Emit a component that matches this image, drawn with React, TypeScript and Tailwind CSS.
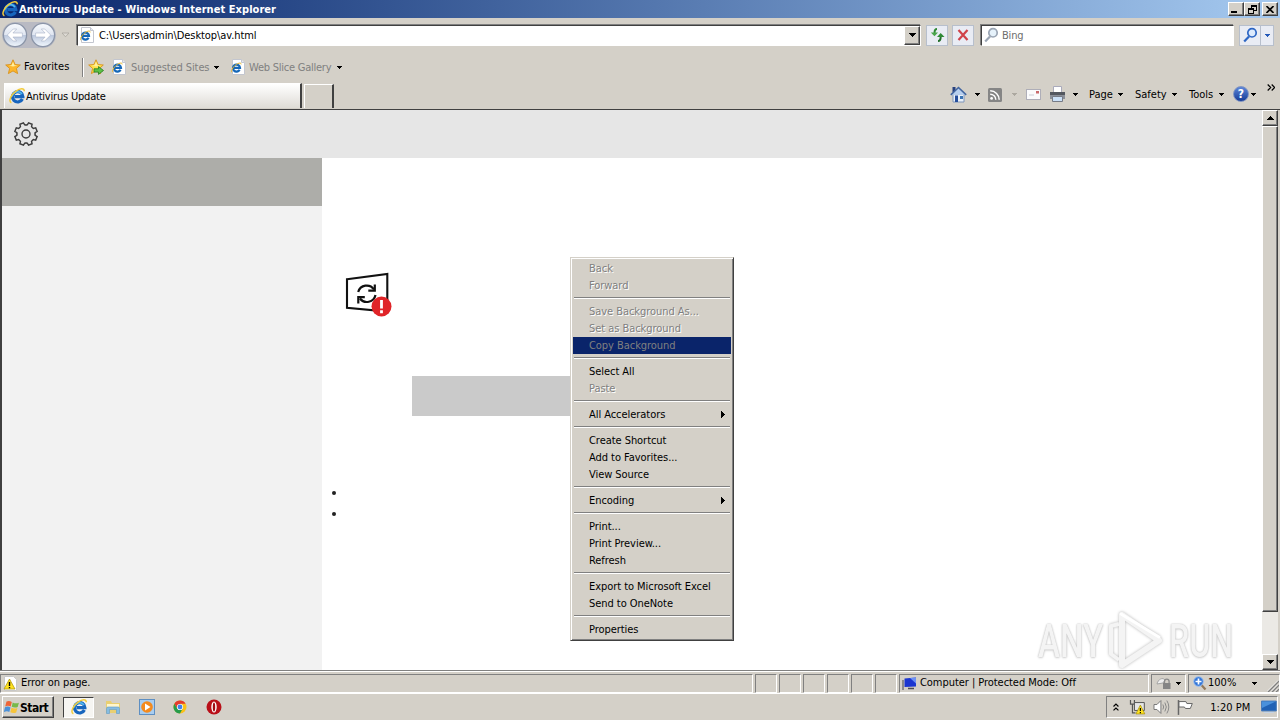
import type { ReactNode } from "react"
import clsx from "clsx"

type MenuItem = { label: string; disabled?: boolean; active?: boolean; submenu?: boolean }

const menuGroups: MenuItem[][] = [
  [
    { label: "Back", disabled: true },
    { label: "Forward", disabled: true },
  ],
  [
    { label: "Save Background As...", disabled: true },
    { label: "Set as Background", disabled: true },
    { label: "Copy Background", disabled: true, active: true },
  ],
  [{ label: "Select All" }, { label: "Paste", disabled: true }],
  [{ label: "All Accelerators", submenu: true }],
  [{ label: "Create Shortcut" }, { label: "Add to Favorites..." }, { label: "View Source" }],
  [{ label: "Encoding", submenu: true }],
  [{ label: "Print..." }, { label: "Print Preview..." }, { label: "Refresh" }],
  [{ label: "Export to Microsoft Excel" }, { label: "Send to OneNote" }],
  [{ label: "Properties" }],
]

const raised = "border border-t-white border-l-white border-r-[#404040] border-b-[#404040] bg-[#d4d0c8] shadow-[inset_-1px_-1px_0_#808080]"
const sunken = "border border-t-[#808080] border-l-[#808080] border-r-white border-b-white"

function Caret({ className = "text-black" }: { className?: string }) {
  return (
    <svg width="5" height="3" viewBox="0 0 5 3" className={clsx("shrink-0", className)} shapeRendering="crispEdges">
      <path d="M0 0h5v1H4v1H3v1H2V2H1V1H0z" fill="currentColor" />
    </svg>
  )
}

function IeLogo({ size = 16 }: { size?: number }) {
  return (
    <svg width={size} height={size} viewBox="0 0 16 16" className="shrink-0">
      <path d="M13.4 11A5.2 5.2 0 1 1 13.9 8.7H5.500" fill="none" stroke="#1765bd" strokeWidth="3.200" />
      <path d="M3.200 8.500A5.400 5.400 0 0 1 13 6" fill="none" stroke="#52b9f0" strokeWidth="1.700" />
      <path d="M2.400 14.800C-.9 13.400 2 6.800 7 3.200 11 .4 15.500-.3 15.200 3.200" fill="none" stroke="#f2cb3c" strokeWidth="1.500" />
    </svg>
  )
}

function IePage() {
  return (
    <svg width="15" height="16" viewBox="0 0 15 16" className="shrink-0">
      <path d="M1.500.5h9l3 3v12h-12z" fill="#fff" stroke="#c3c6cf" />
      <path d="M10.500.5v3h3" fill="#e5e8ef" stroke="#c3c6cf" />
      <path d="M8.600 10.700A3.500 3.500 0 1 1 9 8.900H2.500" fill="none" stroke="#1668b8" strokeWidth="2.200" />
      <path d="M.8 13.200C-.6 11.600 3 6.300 6.800 4.600c2-.9 3.500-.8 3.400.8" fill="none" stroke="#e9b72b" strokeWidth="1" />
    </svg>
  )
}

function Star({ arrow }: { arrow?: boolean }) {
  return (
    <svg width="16" height="16" viewBox="0 0 16 16" className="shrink-0">
      <path d="M8 .8l2.1 4.7 5.2.5-3.9 3.4 1.2 5.2L8 11.9l-4.6 2.7 1.2-5.2L.7 6l5.2-.5z" fill={arrow ? "#ffe24a" : "#fdb62b"} stroke="#d8921c" strokeWidth=".9" />
      <path d="M8 2.8l1.4 3.4 3.2.3-4.6 1-4.2-.9 2.8-.4z" fill="#fff0a0" />
      {arrow && <path d="M6 9.8h4.5V7.600l5 3.900-5 3.900v-2.300H6z" fill="#5cc148" stroke="#267b1c" strokeWidth=".8" />}
    </svg>
  )
}

function Magnifier({ stroke, fill }: { stroke: string; fill: string }) {
  return (
    <svg width="15" height="16" viewBox="0 0 15 16" className="shrink-0">
      <path d="M6 9.5L1.2 14.6" stroke={stroke} strokeWidth="2.2" />
      <circle cx="9" cy="5.8" r="4.2" fill={fill} stroke={stroke} strokeWidth="1.7" />
    </svg>
  )
}

function NavCircle({ flip }: { flip?: boolean }) {
  return (
    <svg width="26" height="26" viewBox="0 0 26 26" className="shrink-0">
      <defs>
        <linearGradient id="nav" x1="0" y1="0" x2="0" y2="1">
          <stop offset="0" stopColor="#f8fafd" />
          <stop offset=".48" stopColor="#e0e6f1" />
          <stop offset=".52" stopColor="#bcc8dd" />
          <stop offset="1" stopColor="#f1f7fd" />
        </linearGradient>
      </defs>
      <circle cx="13" cy="13" r="11.6" fill="url(#nav)" stroke="#8b95a8" strokeWidth="1.3" />
      <g transform={flip ? "translate(26 0) scale(-1 1)" : undefined}>
        <path d="M5.3 13l6-6h3.400l-3.800 4h9.500v4h-9.500l3.800 4h-3.400z" fill="#fff" stroke="#a7b2c8" strokeWidth=".6" />
      </g>
    </svg>
  )
}

function TitleBar() {
  return (
    <div className="flex h-[18px] items-center bg-linear-to-r from-[#0a246a] to-[#a6caf0] pr-[2px] pl-[2px]">
      <IeLogo />
      <span className="ml-px pt-[2px] text-[11px] font-bold tracking-[0.05px] text-white">Antivirus Update - Windows Internet Explorer</span>
      <div className="ml-auto flex">
        <div className={clsx("flex h-[14px] w-4 items-end justify-center pb-[2px]", raised)}>
          <div className="mr-1 h-[2px] w-[6px] bg-black" />
        </div>
        <div className={clsx("flex h-[14px] w-4 items-center justify-center", raised)}>
          <svg width="9" height="9" viewBox="0 0 9 9" shapeRendering="crispEdges">
            <path d="M3 0h6v6H6V5h2V2H4v1H3zM0 3h6v6H0zm1 2v3h4V5z" fill="#000" fillRule="evenodd" />
          </svg>
        </div>
        <div className={clsx("ml-[2px] flex h-[14px] w-4 items-center justify-center", raised)}>
          <svg width="8" height="7" viewBox="0 0 8 7">
            <path d="M.5 0l7 7M7.5 0l-7 7" stroke="#000" strokeWidth="1.6" />
          </svg>
        </div>
      </div>
    </div>
  )
}

function ToolButton({ className, children }: { className: string; children: ReactNode }) {
  return <div className={clsx("flex h-[21px] items-center justify-center border border-[#b7bfcc] bg-[#e9ecf4]", className)}>{children}</div>
}

function AddressRow() {
  return (
    <div className="flex h-[34px] items-center pl-[2px]">
      <div className="flex rounded-full bg-[#b9bac3]">
        <NavCircle />
        <div className="ml-[2px]">
          <NavCircle flip />
        </div>
      </div>
      <svg width="9" height="6" viewBox="0 0 9 6" className="ml-[5px]">
        <path d="M1 1h7L4.500 4.800z" fill="#dedbd5" stroke="#aaa69e" strokeWidth=".8" />
      </svg>
      <div className="ml-[7px] flex h-[21px] w-[844px] items-center border border-t-[#404040] border-r-white border-b-white border-l-[#404040] bg-white pl-[2px] shadow-[-1px_-1px_0_#808080]">
        <IePage />
        <span className="ml-[4px] pt-[2px] text-[11px] tracking-[-0.080px]">C:\Users\admin\Desktop\av.html</span>
        <div className={clsx("ml-auto flex h-[19px] w-4 items-center justify-center", raised)}>
          <svg width="7" height="4" viewBox="0 0 7 4" shapeRendering="crispEdges">
            <path d="M0 0h7v1H6v1H5v1H4v1H3V3H2V2H1V1H0z" />
          </svg>
        </div>
      </div>
      <ToolButton className="ml-[5px] w-[22px]">
        <svg width="15" height="14" viewBox="0 0 15 14">
          <path d="M7 1C4.500 1 4.500 3 4.500 5" fill="none" stroke="#2f8a35" strokeWidth="2" />
          <path d="M.8 4.500h7.200L4.500 8.300z" fill="#4ba54c" />
          <path d="M8 13c2.500 0 2.700-2 2.700-4.500" fill="none" stroke="#226f2a" strokeWidth="2" />
          <path d="M7 9h7.500L10.700 5z" fill="#2f8a35" />
        </svg>
      </ToolButton>
      <ToolButton className="ml-[4px] w-[22px]">
        <svg width="12" height="12" viewBox="0 0 12 12">
          <path d="M1.500 1l9 10M10.500 1l-9 10" stroke="#d0424a" strokeWidth="2.200" />
        </svg>
      </ToolButton>
      <div className="ml-[7px] flex h-[21px] w-[253px] items-center border border-t-[#404040] border-r-white border-b-white border-l-[#404040] bg-white pl-[2px] shadow-[-1px_-1px_0_#808080]">
        <Magnifier stroke="#9aa5b4" fill="#e6f2fb" />
        <span className="ml-[3px] pt-[2px] text-[11px] tracking-[-0.200px] text-[#6d6d6d]">Bing</span>
      </div>
      <ToolButton className="ml-[5px] w-[22px]">
        <Magnifier stroke="#2d66c4" fill="#dceafd" />
      </ToolButton>
      <ToolButton className="-ml-px w-[14px]">
        <Caret className="text-[#2459b8]" />
      </ToolButton>
    </div>
  )
}

function FavoritesRow() {
  return (
    <div className="flex h-[30px] items-center pl-[5px] text-[11px]">
      <Star />
      <span className="ml-[3px] w-[48px] tracking-[0.1px]">Favorites</span>
      <div className="ml-[10px] h-[19px] w-[2px] border-l border-[#808080] bg-white" />
      <div className="ml-[4px] flex">
        <Star arrow />
      </div>
      <div className="ml-[8px] flex">
        <IePage />
      </div>
      <span className="ml-[4px] w-[78px] pt-[2px] tracking-[-0.1px] text-[#808080]">Suggested Sites</span>
      <div className="ml-[5px] flex">
        <Caret />
      </div>
      <div className="ml-[12px] flex">
        <IePage />
      </div>
      <span className="ml-[3px] w-[83px] pt-[2px] tracking-[-0.240px] text-[#808080]">Web Slice Gallery</span>
      <div className="ml-[5px] flex">
        <Caret />
      </div>
    </div>
  )
}

function TabRow() {
  return (
    <div className="flex h-[27px] items-start pl-[4px] text-[11px]">
      <div className="mt-px flex h-[25px] w-[298px] items-center border-t border-r-2 border-l border-t-white border-r-[#404040] border-l-white bg-linear-to-b from-white to-[#dfdcd6] pl-[4px]">
        <IeLogo size={16} />
        <span className="ml-px pt-[2px] tracking-[-0.2px]">Antivirus Update</span>
      </div>
      <div className="mt-[2px] ml-[2px] h-[24px] w-[30px] border-t border-r-2 border-l border-t-white border-r-[#404040] border-l-white" />
      <div className="mt-[3px] ml-[616px] flex h-[18px] items-center">
        <svg width="17" height="17" viewBox="0 0 17 17">
          <path d="M2.500 1h3v5h-3z" fill="#27417e" />
          <path d="M3 8h11v8H3z" fill="#e9f0f9" stroke="#7e96bb" />
          <path d="M.8 8.800L8.500 1.500l7.700 7.300" fill="#b8d0ef" stroke="#42659f" strokeWidth="1.600" />
          <path d="M5 9.500h3V16H5z" fill="#254e9c" />
          <path d="M10 10h3v3h-3z" fill="#3c74b4" />
        </svg>
        <div className="ml-[8px] flex w-[5px]">
          <Caret />
        </div>
        <svg width="14" height="14" viewBox="0 0 14 14" className="mt-[2px] ml-[8px]">
          <rect width="14" height="14" rx="1.500" fill="#858585" />
          <circle cx="3.600" cy="10.400" r="1.400" fill="#fff" />
          <path d="M2.200 6.200a5.600 5.600 0 0 1 5.600 5.600M2.200 2.800a9 9 0 0 1 9 9" fill="none" stroke="#fff" strokeWidth="1.500" />
        </svg>
        <div className="ml-[10px] flex">
          <Caret className="text-[#aca8a0]" />
        </div>
        <svg width="15" height="11" viewBox="0 0 15 11" className="ml-[9px]">
          <rect x=".5" y=".5" width="14" height="10" fill="#fbfbfc" stroke="#aeaeb8" />
          <path d="M10 2h3v2.500h-3z" fill="#c9696b" />
          <path d="M3 6h5" stroke="#c9cbd4" />
        </svg>
        <svg width="17" height="16" viewBox="0 0 17 16" className="ml-[8px]">
          <path d="M4.500.5h8V7h-8z" fill="#fff" stroke="#aab" />
          <path d="M1 6h15v7H1z" fill="#8b8f98" />
          <path d="M1 6h15v3H1z" fill="#53575f" />
          <path d="M3.500 10.500h10v5h-10z" fill="#cbe0f7" stroke="#767b86" />
        </svg>
        <div className="ml-[7px] flex">
          <Caret />
        </div>
        <span className="ml-[11px] w-[26px] pt-[2px]">Page</span>
        <div className="ml-[3px] flex">
          <Caret />
        </div>
        <span className="ml-[12px] w-[33px] pt-[2px]">Safety</span>
        <div className="ml-[4px] flex">
          <Caret />
        </div>
        <span className="ml-[12px] w-[26px] pt-[2px]">Tools</span>
        <div className="ml-[4px] flex">
          <Caret />
        </div>
        <div className="ml-[9px] flex h-4 w-4 items-center justify-center rounded-full border border-[#8094c2] bg-linear-to-b from-[#5d86d8] to-[#173c98] text-[12px] font-bold text-white">?</div>
        <div className="ml-[2px] flex">
          <Caret />
        </div>
        <svg width="8" height="7" viewBox="0 0 8 7" className="mb-[13px] ml-[11px]">
          <path d="M.7.5l3 3-3 3M4.700.5l3 3-3 3" fill="none" stroke="#000" strokeWidth="1.200" />
        </svg>
      </div>
    </div>
  )
}

function ScrollButton({ up }: { up?: boolean }) {
  return (
    <div className={clsx("flex h-4 w-4 shrink-0 items-center justify-center", raised)}>
      <svg width="7" height="4" viewBox="0 0 7 4" shapeRendering="crispEdges" className={up ? "rotate-180" : undefined}>
        <path d="M0 0h7v1H6v1H5v1H4v1H3V3H2V2H1V1H0z" />
      </svg>
    </div>
  )
}

function Gear() {
  const angles = [0, 45, 90, 135, 180, 225, 270, 315]
  return (
    <svg width="26" height="26" viewBox="-13 -13 26 26">
      {angles.map((a) => (
        <path key={a} d="M-3.800-8.200L-2.300-8.900-1.900-11.300H1.900L2.300-8.900 3.800-8.200" transform={`rotate(${a + 22.5})`} fill="none" stroke="#3c3c3c" strokeWidth="1.400" />
      ))}
      <circle r="4" fill="none" stroke="#3c3c3c" strokeWidth="1.400" />
    </svg>
  )
}

function UpdateIcon() {
  return (
    <svg width="48" height="46" viewBox="0 0 48 46">
      <path d="M3 8.200L43.300 3v37.500L3 36.800z" fill="#fff" stroke="#111" strokeWidth="2.100" />
      <path d="M14.200 21a8.800 8.800 0 0 1 15.800-2.500M31.500 24a8.800 8.800 0 0 1-15.600 3.500" fill="none" stroke="#111" strokeWidth="2.200" />
      <path d="M30.800 13.500v6.200h-6.500M14.300 32.500v-6.300h6.500" fill="none" stroke="#111" strokeWidth="2.200" />
      <circle cx="37.500" cy="35.500" r="10" fill="#e02428" />
      <path d="M37.500 29v8.500M37.500 39.300v3" stroke="#fff" strokeWidth="2.800" />
    </svg>
  )
}

function PageArea() {
  return (
    <div className="flex h-[561px] border-t border-l-2 border-[#404040] bg-white">
      <div className="flex min-w-0 flex-1 flex-col">
        <div className="h-12 shrink-0 bg-[#e6e6e6] pt-[11px] pl-[11px]">
          <Gear />
        </div>
        <div className="flex flex-1">
          <div className="w-[320px] bg-[#f2f2f2]">
            <div className="h-12 bg-[#adada9]" />
          </div>
          <div className="flex-1">
            <div className="mt-[113px] ml-[22px] h-[46px]">
              <UpdateIcon />
            </div>
            <div className="mt-[59px] ml-[90px] h-10 w-[200px] bg-[#cacaca]" />
            <div className="mt-[75px] ml-[10px] h-1 w-1 rounded-full bg-[#222]" />
            <div className="mt-[17px] ml-[10px] h-1 w-1 rounded-full bg-[#222]" />
          </div>
        </div>
      </div>
      <div className="flex w-4 flex-col bg-[#ebe9e5]">
        <ScrollButton up />
        <div className={clsx("h-[486px]", raised)} />
        <div className="flex-1" />
        <ScrollButton />
      </div>
      <div className="w-[2px] bg-[#d4d0c8]" />
    </div>
  )
}

function StatusBar() {
  return (
    <div className="flex h-[22px] items-center border-t border-white pt-px text-[11px]">
      <div className={clsx("flex h-[19px] w-[753px] items-center pl-[2px]", sunken)}>
        <svg width="15" height="15" viewBox="0 0 15 15">
          <path d="M1.500.5h9l3 3v11h-12z" fill="#fff" stroke="#c8c8c8" />
          <path d="M6.500 3l5.500 10H1z" fill="#ffe21e" stroke="#b39a10" strokeWidth=".8" />
          <path d="M6.500 6v4M6.500 11v1.300" stroke="#000" strokeWidth="1.400" />
        </svg>
        <span className="ml-[3px] pt-px tracking-[-0.080px]">Error on page.</span>
      </div>
      {[0, 1, 2, 3, 4, 5].map((i) => (
        <div key={i} className={clsx("ml-[2px] h-[19px] w-[22px]", sunken)} />
      ))}
      <div className={clsx("ml-[2px] flex h-[19px] w-[250px] items-center pl-[2px]", sunken)}>
        <svg width="16" height="15" viewBox="0 0 16 15">
          <path d="M1 4v10" stroke="#8b8b8b" strokeWidth="2" />
          <path d="M2.500 2.500L14 1.500v9l-11.500.5z" fill="#1b36d0" />
          <path d="M8 2l6-.5v6z" fill="#6c90f5" />
          <path d="M6 12.500h6" stroke="#4c4c55" strokeWidth="1.500" />
        </svg>
        <span className="ml-[2px] pt-px tracking-[-0.050px]">Computer | Protected Mode: Off</span>
      </div>
      <div className={clsx("ml-[2px] flex h-[19px] w-[35px] items-center pl-[4px]", sunken)}>
        <svg width="16" height="14" viewBox="0 0 16 14">
          <path d="M1 8c1-5 6-7 8-4l-2 3z" fill="#efefef" stroke="#a4a4a4" />
          <path d="M8.500 7V5.500a2.300 2.300 0 0 1 4.600 0V7" fill="none" stroke="#8a8a8a" strokeWidth="1.300" />
          <path d="M7 7h7.500v6H7z" fill="#858585" />
        </svg>
        <div className="ml-[4px] flex">
          <Caret />
        </div>
      </div>
      <div className={clsx("ml-[2px] flex h-[19px] flex-1 items-center pl-[4px]", sunken)}>
        <svg width="14" height="15" viewBox="0 0 14 15">
          <path d="M8 8.500l4.500 5" stroke="#937a5d" strokeWidth="2.200" />
          <circle cx="5.500" cy="5.500" r="4.800" fill="#3477d8" stroke="#9fc0ec" />
          <path d="M5.500 2.500v6M2.500 5.500h6" stroke="#fff" strokeWidth="1.700" />
        </svg>
        <span className="ml-px w-[30px] pt-px">100%</span>
        <div className="ml-[14px] flex">
          <Caret />
        </div>
        <svg width="12" height="12" viewBox="0 0 12 12" className="mt-[6px] ml-auto">
          <path d="M1 12L12 1M5 12l7-7M9 12l3-3" stroke="#808080" strokeWidth="1.500" />
          <path d="M0 11.500L11 .5M4 11.500l7-7M8 11.500l3-3" stroke="#fff" strokeWidth=".7" />
        </svg>
      </div>
    </div>
  )
}

function Taskbar() {
  return (
    <div className="flex h-[27px] items-center border-t border-white pl-[2px] text-[11px]">
      <div className={clsx("flex h-[22px] w-[52px] items-center pl-px", raised)}>
        <svg width="16" height="16" viewBox="0 0 16 16">
          <path d="M2.500 2.600C4.500 1.600 6 2 7.800 3L6.700 7.500C5 6.500 3.200 6.400 1.200 7.400z" fill="#ee6537" />
          <path d="M8.700 3.500c2 1 4 1.200 6.200.2L13.700 8c-2 .9-4 .7-6-.2z" fill="#77b94a" />
          <path d="M1 8.200c2-1 3.800-.8 5.500.2l-1.200 4.500C3.600 12 2 12-.2 13z" fill="#4b91d8" />
          <path d="M7.500 8.800c2 1 4 1 5.900.2l-1.200 4.500c-2 .9-4 .7-5.900-.2z" fill="#f6c43a" />
        </svg>
        <span className="pt-[2px] text-[12px] font-bold tracking-[-0.500px]">Start</span>
      </div>
      <div className="ml-[9px] flex h-[21px] w-[31px] items-center justify-center border border-t-[#404040] border-r-white border-b-white border-l-[#404040] bg-[#f6f5f2]">
        <IeLogo size={16} />
      </div>
      <svg width="16" height="16" viewBox="0 0 16 16" className="ml-[11px]">
        <path d="M1 2h5l1 2h8v10H1z" fill="#e9cf71" />
        <path d="M2 5h12v3H2z" fill="#fff6cc" />
        <path d="M1.500 14.500V9.500q0-1.500 1.500-1.500h10q1.500 0 1.500 1.500v5h-3v-4h-7v4z" fill="#85bce4" stroke="#609bc8" strokeWidth=".6" />
      </svg>
      <svg width="16" height="16" viewBox="0 0 16 16" className="ml-[18px]">
        <rect x=".5" y=".5" width="15" height="15" fill="#a8cdf0" stroke="#5e8fc2" />
        <circle cx="8" cy="8" r="5.800" fill="#f48a1d" />
        <path d="M6 4.500v7L11.500 8z" fill="#fff" />
      </svg>
      <svg width="14" height="14" viewBox="0 0 14 14" className="ml-[18px]">
        <circle cx="7" cy="7" r="6.500" fill="#fbc116" />
        <path d="M1.370 3.750A6.500 6.500 0 0 1 12.630 3.750H7L4.200 8.600z" fill="#e33b2e" />
        <path d="M1.370 3.750A6.500 6.500 0 0 0 7 13.500L9.800 8.600 7 10.200 4.200 8.600z" fill="#259b4b" />
        <circle cx="7" cy="7" r="3.100" fill="#fff" />
        <circle cx="7" cy="7" r="2.400" fill="#3f82ec" />
      </svg>
      <svg width="16" height="16" viewBox="0 0 16 16" className="ml-[19px]">
        <circle cx="8" cy="8" r="7.500" fill="#b90f18" />
        <ellipse cx="8" cy="8" rx="2.700" ry="5.500" fill="#fff" />
        <ellipse cx="8" cy="8" rx="1.200" ry="4.500" fill="#a20b13" />
      </svg>
      <div className={clsx("mr-[2px] ml-auto flex h-[22px] w-[172px] items-center pl-[6px]", sunken)}>
        <svg width="6" height="8" viewBox="0 0 6 8">
          <path d="M.5 3.500L3 1l2.500 2.500M.5 7.500L3 5l2.500 2.500" fill="none" stroke="#000" strokeWidth="1.200" />
        </svg>
        <svg width="17" height="16" viewBox="0 0 17 16" className="ml-[10px]">
          <path d="M1.500 1v4h4V1M3.500 5v9h3" fill="none" stroke="#555" strokeWidth="1.200" />
          <path d="M5.500 3.500h10v8h-10z" fill="#e6e6e6" stroke="#555" />
          <path d="M11.500 6l4.500 9H7z" fill="#ffe21e" stroke="#a08a0e" strokeWidth=".7" />
          <path d="M11.500 9v3M11.500 13v1.200" stroke="#000" strokeWidth="1.200" />
        </svg>
        <svg width="17" height="16" viewBox="0 0 17 16" className="ml-[7px]">
          <path d="M1 5.500h3l4-4v13l-4-4H1z" fill="#fff" stroke="#777" />
          <path d="M10 5.500q1.500 2.500 0 5M12 3.500q3 4.500 0 9M14 1.500q4 6.500 0 13" fill="none" stroke="#888" />
        </svg>
        <svg width="17" height="16" viewBox="0 0 17 16" className="ml-[7px]">
          <path d="M1.500 1v15" stroke="#666" strokeWidth="1.500" />
          <path d="M2 2.500h7l1 2h5.500l-2 5H8.500l-1-1.500H2z" fill="#fff" stroke="#666" />
        </svg>
        <span className="ml-[17px] w-[40px] pt-[2px]">1:20 PM</span>
        <svg width="16" height="14" viewBox="0 0 16 14" className="ml-[11px]">
          <path d="M.5 1h15v10H.5z" fill="#2162b5" stroke="#4b7cba" />
          <path d="M1 1.500h14L1 8z" fill="#4a91dc" />
          <path d="M3 12.500h10" stroke="#c3d3e8" />
        </svg>
      </div>
    </div>
  )
}

function ContextMenu() {
  return (
    <div className="absolute top-[257px] left-[570px] w-[164px] border border-t-[#d4d0c8] border-r-[#404040] border-b-[#404040] border-l-[#d4d0c8] bg-[#d4d0c8] text-[11px] tracking-[-0.050px] shadow-[inset_1px_1px_0_#fff,inset_-1px_-1px_0_#808080]">
      <div className="p-[2px]">
        {menuGroups.map((group, i) => (
          <div key={i}>
            {i > 0 && <div className="mx-px mt-[3px] mb-[4px] h-[2px] border-t border-[#808080] bg-white" />}
            {group.map((item) => (
              <div
                key={item.label}
                className={clsx(
                  "flex h-[17px] items-center justify-between pr-[6px] pl-4",
                  item.active && "bg-[#0a246a] text-[#808080]",
                  item.disabled && !item.active && "text-[#808080] [text-shadow:1px_1px_0_#fff]",
                )}
              >
                <span className="pt-[2px]">{item.label}</span>
                {item.submenu && (
                  <svg width="4" height="7" viewBox="0 0 4 7" shapeRendering="crispEdges">
                    <path d="M0 0h1v1h1v1h1v1h1v1H3v1H2v1H1v1H0z" />
                  </svg>
                )}
              </div>
            ))}
          </div>
        ))}
      </div>
    </div>
  )
}

function Watermark() {
  const word =
    "w-max origin-left font-['Roboto','Liberation_Sans',sans-serif] text-[46px] leading-none font-medium text-[#f4f4f4] [text-shadow:0_0_2px_#b4b4b4,0_1px_3px_#d8d8d8]"
  return (
    <div className="absolute top-[608px] left-[1038px] flex h-[64px] w-[200px] items-center pb-px">
      <div className="w-[67px] pt-[2px]">
        <div className={clsx(word, "scale-x-[0.720]")}>ANY</div>
      </div>
      <svg width="60" height="62" viewBox="0 0 60 62" className="shrink-0 overflow-visible drop-shadow-[0_0_1.500px_#b4b4b4]">
        <path d="M14 15l-8 2v28l8 6" fill="none" stroke="#f4f4f4" strokeWidth="4" strokeLinejoin="round" />
        <path d="M17 6v50l37-24.500z" fill="none" stroke="#f4f4f4" strokeWidth="6" strokeLinejoin="round" />
        <path d="M16 5l38 23" stroke="#fff" strokeWidth="3" strokeLinecap="round" />
      </svg>
      <div className="ml-[4px] pt-[2px]">
        <div className={clsx(word, "scale-x-[0.700]")}>RUN</div>
      </div>
    </div>
  )
}

export default function App() {
  return (
    <div className="relative h-[720px] w-[1280px] overflow-hidden bg-[#d4d0c8] font-['DejaVu_Sans_Condensed','DejaVu_Sans',sans-serif] whitespace-nowrap text-black">
      <TitleBar />
      <AddressRow />
      <FavoritesRow />
      <TabRow />
      <PageArea />
      <div className="h-px bg-[#808080]" />
      <StatusBar />
      <Taskbar />
      <ContextMenu />
      <Watermark />
    </div>
  )
}
